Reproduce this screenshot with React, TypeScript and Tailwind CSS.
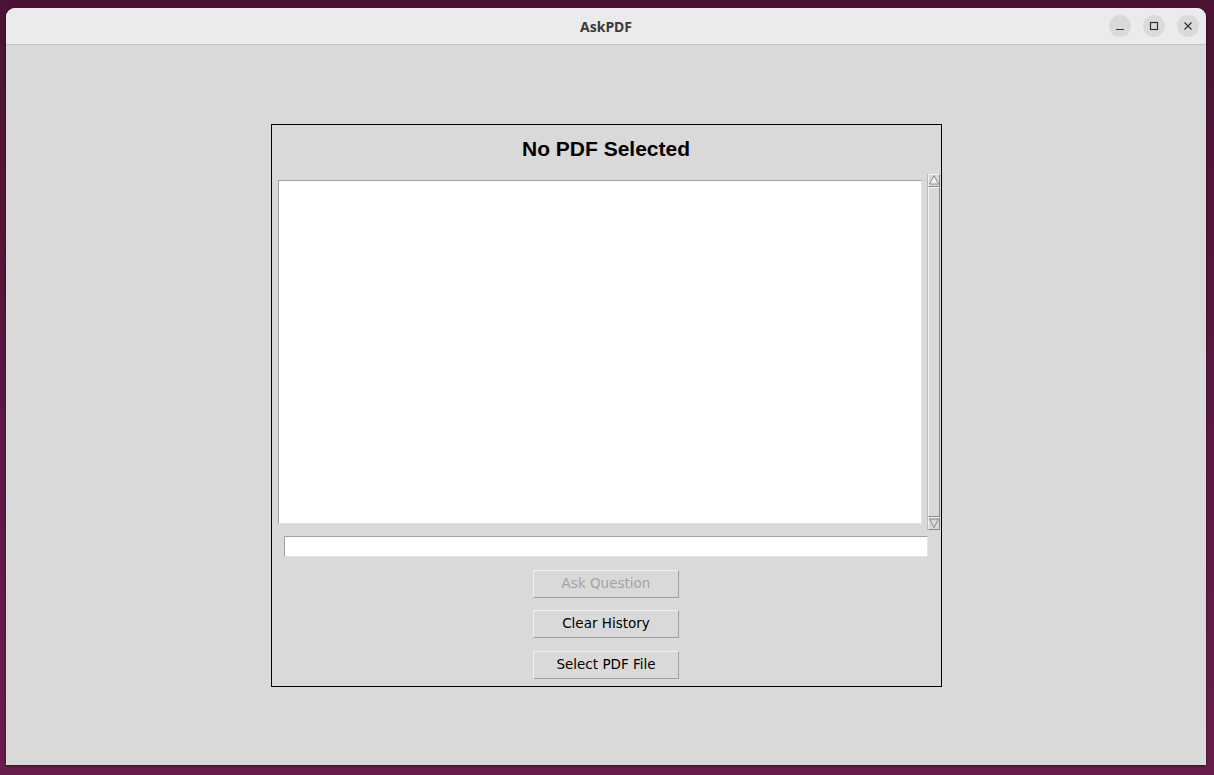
import React from "react";

function ScrollArrow({ down }: { down?: boolean }) {
  return (
    <div className="flex h-[13px] w-[12px] items-center justify-center border border-t-[#f2f2f2] border-l-[#f2f2f2] border-b-[#8a8a8a] border-r-[#8a8a8a] bg-[#d9d9d9]">
      <svg width="10" height="10" viewBox="0 0 10 10">
        {down ? (
          <path d="M0.5 1 L9.5 1 L5 9.5 Z" fill="#d9d9d9" stroke="#8a8a8a" strokeWidth="1" />
        ) : (
          <path d="M0.5 9 L9.5 9 L5 0.5 Z" fill="#f4f4f4" stroke="#8a8a8a" strokeWidth="1" />
        )}
      </svg>
    </div>
  );
}

function TkButton({ label, disabled }: { label: string; disabled?: boolean }) {
  return (
    <button
      className={`h-[28px] w-[146px] border border-t-[#f0f0f0] border-l-[#f0f0f0] border-b-[#a0a0a0] border-r-[#a0a0a0] bg-[#d9d9d9] text-[13.5px] ${disabled ? "text-[#a3a3a3]" : "text-black"}`}
      style={{ fontFamily: '"DejaVu Sans", sans-serif' }}
    >
      {label}
    </button>
  );
}

export default function App() {
  return (
    <div className="h-[775px] w-[1214px] overflow-hidden bg-gradient-to-b from-[#4a1334] to-[#6a1d4c] pl-[6px] pt-[8px]">
      <div className="flex h-[757px] w-[1200px] flex-col overflow-hidden rounded-t-[9px] bg-[#d9d9d9] shadow-[0_1px_3px_rgba(0,0,0,0.5)]">
        <div className="relative flex h-[37px] shrink-0 items-center justify-center border-b border-[#c2c2c2] bg-[#ebebeb]">
          <span className="text-[14px] font-bold text-[#3a3a3a]" style={{ fontFamily: '"Noto Sans", sans-serif' }}>
            AskPDF
          </span>
          <div className="absolute right-[7px] top-[7px] flex gap-[12px]">
            <div className="flex h-[22px] w-[22px] items-center justify-center rounded-full bg-[#dadada]">
              <svg width="10" height="10" viewBox="0 0 10 10">
                <path d="M1 8.5 H9" stroke="#333" strokeWidth="1.2" />
              </svg>
            </div>
            <div className="flex h-[22px] w-[22px] items-center justify-center rounded-full bg-[#dadada]">
              <svg width="10" height="10" viewBox="0 0 10 10">
                <rect x="1.5" y="1.5" width="7" height="7" fill="none" stroke="#333" strokeWidth="1.2" />
              </svg>
            </div>
            <div className="flex h-[22px] w-[22px] items-center justify-center rounded-full bg-[#dadada]">
              <svg width="10" height="10" viewBox="0 0 10 10">
                <path d="M1.5 1.5 L8.5 8.5 M8.5 1.5 L1.5 8.5" stroke="#333" strokeWidth="1.2" />
              </svg>
            </div>
          </div>
        </div>

        <div className="flex flex-1 items-center justify-center">
          <div className="flex w-[671px] flex-col border border-black">
            <div
              className="flex h-[49px] items-center justify-center text-[21px] font-bold text-black"
              style={{ fontFamily: '"Liberation Sans", Arial, sans-serif' }}
            >
              No PDF Selected
            </div>

            <div className="flex h-[356px] items-center">
              <div className="ml-[6px] h-[344px] w-[644px] border border-t-[#a0a0a0] border-l-[#a0a0a0] border-b-[#e4e4e4] border-r-[#e4e4e4] bg-white" />
              <div className="ml-[5px] flex h-[356px] w-[13px] flex-col border-l border-[#bdbdbd] bg-[#d9d9d9]">
                <ScrollArrow />
                <div className="flex-1 border border-t-[#f2f2f2] border-l-[#f2f2f2] border-b-[#8a8a8a] border-r-[#8a8a8a]" />
                <ScrollArrow down />
              </div>
            </div>

            <div className="mt-[6px] flex justify-center">
              <div className="h-[21px] w-[644px] border border-t-[#a0a0a0] border-l-[#a0a0a0] border-b-[#e4e4e4] border-r-[#e4e4e4] bg-white" />
            </div>

            <div className="mb-[7px] mt-[13px] flex flex-col items-center gap-[12px]">
              <TkButton label="Ask Question" disabled />
              <div className="h-[28px]">
                <TkButton label="Clear History" />
              </div>
              <div className="-mt-[0px] pt-[1px]">
                <TkButton label="Select PDF File" />
              </div>
            </div>
          </div>
        </div>
      </div>
    </div>
  );
}
